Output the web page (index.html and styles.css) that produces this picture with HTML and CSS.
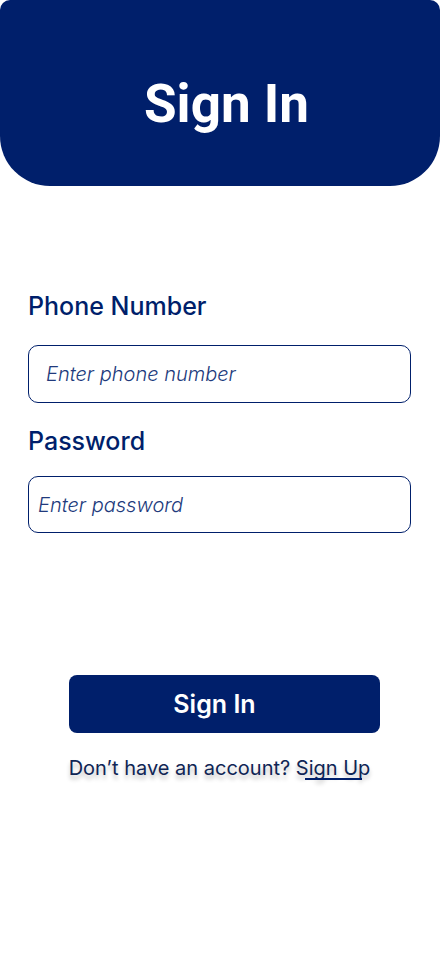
FILE: index.html
```html
<!DOCTYPE html>
<html lang="en">
<head>
<meta charset="utf-8">
<title>Sign In</title>
<link rel="stylesheet" href="styles.css">
</head>
<body>
<div class="page">
  <header class="hero">
    <h1 class="hero-title">Sign In</h1>
  </header>
  <form class="form">
    <label class="label" for="phone">Phone Number</label>
    <div class="field field-phone"><span class="placeholder">Enter phone number</span></div>
    <label class="label label-pass" for="pass">Password</label>
    <div class="field field-pass"><span class="placeholder">Enter password</span></div>
  </form>
  <div class="actions">
    <button class="btn" type="button">Sign In</button>
    <p class="footer-text">Don’t have an account? <span class="link">Sign Up</span></p>
  </div>
</div>
</body>
</html>
```
FILE: styles.css
```css
* { box-sizing: border-box; }
html, body { margin: 0; padding: 0; background: #fff; }
body { font-family: Inter, "Noto Sans", sans-serif; color: #001f6b; }
.page { width: 440px; height: 956px; }
.hero {
  height: 186px;
  background: #001f6b;
  border-radius: 10px 10px 50px 50px;
  display: flex;
  align-items: center;
  justify-content: center;
  padding-left: 13px;
}
.hero-title {
  margin: 0;
  padding-top: 22px;
  font-family: Roboto, sans-serif;
  font-weight: 700;
  font-size: 53px;
  color: #fff;
}
.form {
  padding: 105px 29px 0 28px;
  display: flex;
  flex-direction: column;
}
.label {
  font-size: 25px;
  font-weight: 500;
  line-height: 30px;
  color: #001f6b;
}
.label-pass { margin-top: 23px; }
.field {
  margin-top: 24px;
  height: 58px;
  border: 1px solid #001f6b;
  border-radius: 10px;
  display: flex;
  align-items: center;
}
.field-phone { padding-left: 17px; }
.field-pass { margin-top: 20px; height: 57px; padding-left: 9px; }
.placeholder {
  font-style: italic;
  font-weight: 300;
  font-size: 20px;
  color: #213a7c;
}
.actions {
  padding-top: 142px;
  padding-left: 9px;
  display: flex;
  flex-direction: column;
  align-items: center;
}
.btn {
  width: 311px;
  height: 58px;
  border: none;
  border-radius: 8px;
  background: #001f6b;
  color: #fff;
  font-family: Inter, sans-serif;
  font-weight: 600;
  font-size: 25px;
  padding: 0 20px 0 0;
}
.footer-text {
  margin: 23px 0 0;
  margin-left: -10px;
  font-size: 20px;
  color: #0f2555;
  text-shadow: 0 4px 4px rgba(0, 0, 0, 0.25);
}
.link { position: relative; }
.link::after {
  content: "";
  position: absolute;
  left: 9px;
  width: 57px;
  bottom: 0;
  height: 2px;
  background: #001f6b;
}
```
